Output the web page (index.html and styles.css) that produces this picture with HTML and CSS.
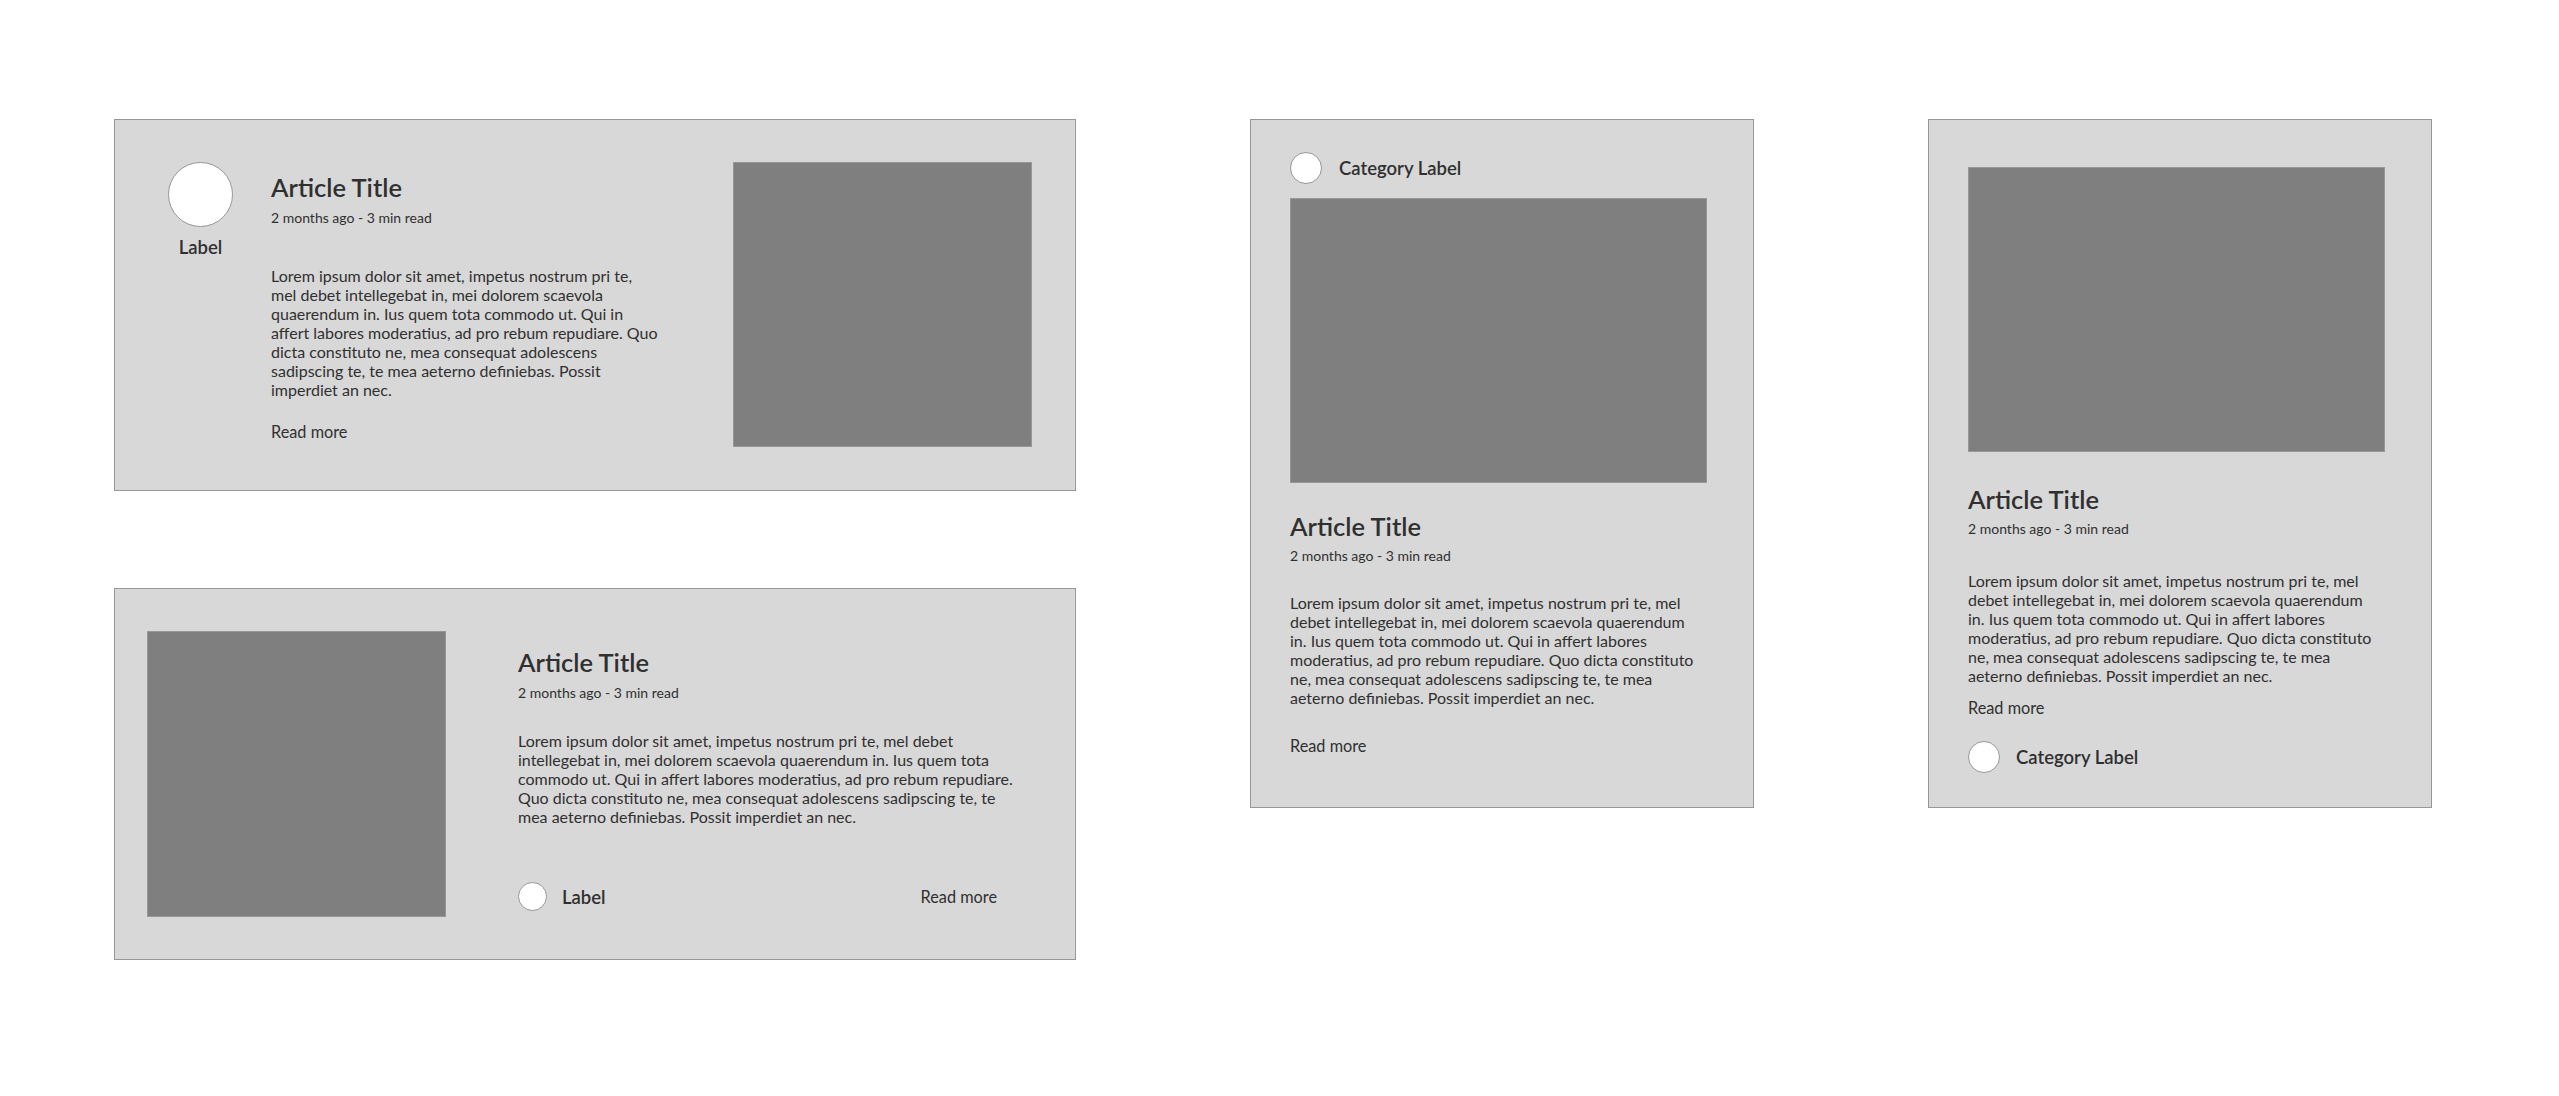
FILE: index.html
```html
<!DOCTYPE html>
<html lang="en">
<head>
    <meta charset="UTF-8">
    <meta name="viewport" content="width=device-width, initial-scale=1.0">
    <title>Article Cards</title>
    <link rel="stylesheet" href="styles.css">
</head>
<body>
    <main class="board">
        <div class="stack">
            <!-- avatar / text / image -->
            <article class="card card-wide card-author">
                <div class="author">
                    <span class="dot dot-lg"></span>
                    <span class="label">Label</span>
                </div>
                <div class="copy">
                    <h2 class="title">Article Title</h2>
                    <p class="meta">2 months ago - 3 min read</p>
                    <p class="excerpt">Lorem ipsum dolor sit amet, impetus nostrum pri te,<br>mel debet intellegebat in, mei dolorem scaevola<br>quaerendum in. Ius quem tota commodo ut. Qui in<br>affert labores moderatius, ad pro rebum repudiare. Quo<br>dicta constituto ne, mea consequat adolescens<br>sadipscing te, te mea aeterno definiebas. Possit<br>imperdiet an nec.</p>
                    <a class="more" href="#">Read more</a>
                </div>
                <div class="thumb thumb-sq"></div>
            </article>

            <!-- image / text + footer -->
            <article class="card card-wide card-media">
                <div class="thumb thumb-sq"></div>
                <div class="copy">
                    <h2 class="title">Article Title</h2>
                    <p class="meta">2 months ago - 3 min read</p>
                    <p class="excerpt">Lorem ipsum dolor sit amet, impetus nostrum pri te, mel debet<br>intellegebat in, mei dolorem scaevola quaerendum in. Ius quem tota<br>commodo ut. Qui in affert labores moderatius, ad pro rebum repudiare.<br>Quo dicta constituto ne, mea consequat adolescens sadipscing te, te<br>mea aeterno definiebas. Possit imperdiet an nec.</p>
                    <div class="foot">
                        <div class="tag">
                            <span class="dot dot-sm"></span>
                            <span class="label">Label</span>
                        </div>
                        <a class="more" href="#">Read more</a>
                    </div>
                </div>
            </article>
        </div>

        <!-- category on top -->
        <article class="card card-tall card-top">
            <div class="tag">
                <span class="dot"></span>
                <span class="label">Category Label</span>
            </div>
            <div class="thumb thumb-wide"></div>
            <h2 class="title">Article Title</h2>
            <p class="meta">2 months ago - 3 min read</p>
            <p class="excerpt">Lorem ipsum dolor sit amet, impetus nostrum pri te, mel<br>debet intellegebat in, mei dolorem scaevola quaerendum<br>in. Ius quem tota commodo ut. Qui in affert labores<br>moderatius, ad pro rebum repudiare. Quo dicta constituto<br>ne, mea consequat adolescens sadipscing te, te mea<br>aeterno definiebas. Possit imperdiet an nec.</p>
            <a class="more" href="#">Read more</a>
        </article>

        <!-- category at bottom -->
        <article class="card card-tall card-bottom">
            <div class="thumb thumb-wide"></div>
            <h2 class="title">Article Title</h2>
            <p class="meta">2 months ago - 3 min read</p>
            <p class="excerpt">Lorem ipsum dolor sit amet, impetus nostrum pri te, mel<br>debet intellegebat in, mei dolorem scaevola quaerendum<br>in. Ius quem tota commodo ut. Qui in affert labores<br>moderatius, ad pro rebum repudiare. Quo dicta constituto<br>ne, mea consequat adolescens sadipscing te, te mea<br>aeterno definiebas. Possit imperdiet an nec.</p>
            <a class="more" href="#">Read more</a>
            <div class="tag">
                <span class="dot"></span>
                <span class="label">Category Label</span>
            </div>
        </article>
    </main>
</body>
</html>
```

FILE: styles.css
```css
* {
    margin: 0;
    padding: 0;
    box-sizing: border-box;
}

body {
    background: #fff;
    color: #303030;
    font-family: Lato, "Liberation Sans", sans-serif;
}

.board {
    display: flex;
    align-items: flex-start;
    gap: 174px;
    padding: 119px 0 0 114px;
}

.stack {
    display: flex;
    flex-direction: column;
    gap: 97px;
    width: 962px;
}

.card {
    background: #d8d8d8;
    border: 1px solid #979797;
}

.card-wide {
    display: flex;
    align-items: flex-start;
    height: 372px;
}

.card-tall {
    display: flex;
    flex-direction: column;
    align-items: flex-start;
    width: 504px;
    height: 689px;
}

.thumb {
    background: #7f7f7f;
    border: 1px solid #979797;
    flex-shrink: 0;
}

.thumb-sq {
    width: 299px;
    height: 285px;
}

.thumb-wide {
    width: 417px;
    height: 285px;
}

.dot {
    width: 32px;
    height: 32px;
    border-radius: 50%;
    background: #fff;
    border: 1px solid #979797;
    flex-shrink: 0;
}

.dot-lg {
    width: 65px;
    height: 65px;
}

.dot-sm {
    width: 29px;
    height: 29px;
}

.label {
    font-size: 18.5px;
    line-height: 20px;
    font-weight: 600;
}

.tag {
    display: flex;
    align-items: center;
    gap: 17px;
}

.title {
    font-size: 25.5px;
    line-height: 30px;
    font-weight: 600;
}

.meta {
    font-size: 14px;
    line-height: 16px;
    margin-top: 8px;
}

.excerpt {
    font-size: 16px;
    line-height: 19px;
}

.more {
    font-size: 16.3px;
    line-height: 20px;
    color: #303030;
    text-decoration: none;
}

.copy {
    display: flex;
    flex-direction: column;
    align-items: flex-start;
}

/* card 1 */
.card-author {
    padding: 42px 43px 43px 53px;
}

.author {
    width: 65px;
    display: flex;
    flex-direction: column;
    align-items: center;
    gap: 10px;
}

.card-author .copy {
    width: 410px;
    margin-left: 38px;
    padding-top: 10px;
}

.card-author .excerpt {
    margin-top: 40px;
}

.card-author .more {
    margin-top: 23px;
}

.card-author .thumb {
    margin-left: auto;
}

/* card 2 */
.card-media {
    padding: 42px 43px 42px 32px;
}

.card-media .thumb {
    height: 286px;
}

.card-media .copy {
    flex: 1;
    margin-left: 72px;
    padding-top: 16px;
}

.card-media .excerpt {
    margin-top: 30px;
}

.foot {
    display: flex;
    align-items: center;
    justify-content: space-between;
    width: 100%;
    margin-top: 56px;
    padding-right: 35px;
}

.foot .tag {
    gap: 15px;
}

/* card 3 */
.card-top {
    padding: 32px 46px 0 39px;
}

.card-top .thumb {
    margin-top: 14px;
}

.card-top .title {
    margin-top: 28px;
}

.card-top .meta {
    margin-top: 7px;
}

.card-top .excerpt {
    margin-top: 29px;
}

.card-top .more {
    margin-top: 29px;
}

/* card 4 */
.card-bottom {
    padding: 47px 46px 0 39px;
}

.card-bottom .title {
    margin-top: 32px;
}

.card-bottom .meta {
    margin-top: 7px;
}

.card-bottom .excerpt {
    margin-top: 34px;
}

.card-bottom .more {
    margin-top: 13px;
}

.card-bottom .tag {
    margin-top: 23px;
    gap: 16px;
}
```
